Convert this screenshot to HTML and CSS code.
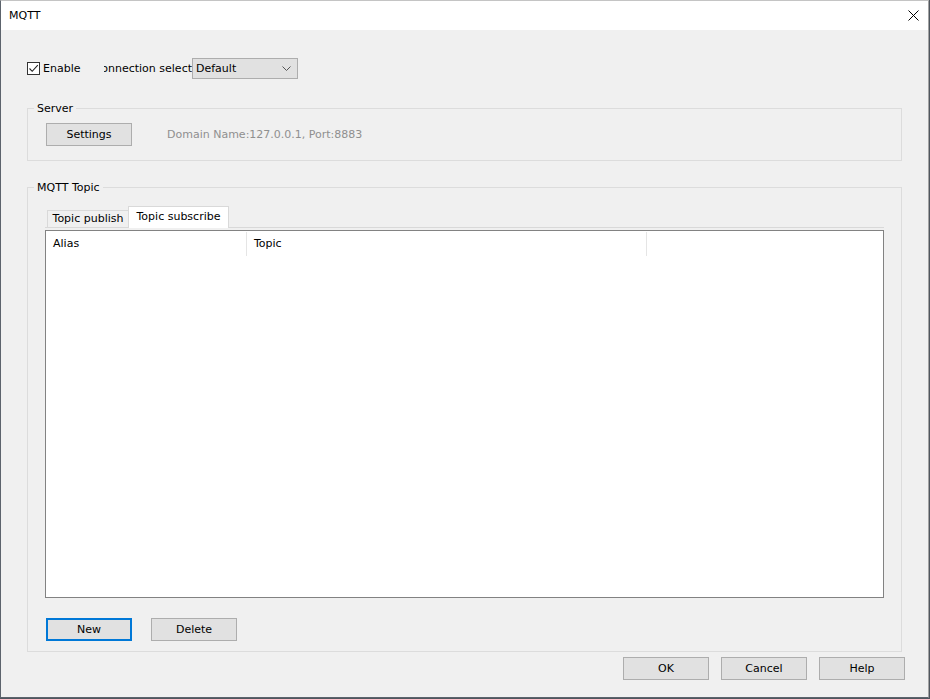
FILE: index.html
```html
<!DOCTYPE html>
<html>
<head>
<meta charset="utf-8">
<title>MQTT</title>
<link rel="stylesheet" href="styles.css">
</head>
<body>
<div class="window">
  <div class="titlebar">
    <span class="title">MQTT</span>
    <span class="close">
      <svg width="11" height="11" viewBox="0 0 11 11"><path d="M0.5 0.5 L10.5 10.5 M10.5 0.5 L0.5 10.5" stroke="#000" stroke-width="1" fill="none"/></svg>
    </span>
  </div>
  <div class="content">
    <div class="row-top">
      <label class="enable">
        <span class="checkbox">
          <svg width="11" height="11" viewBox="0 0 11 11"><path d="M1.5 5.5 L4.2 8.3 L9.8 2.2" stroke="#222" stroke-width="1.1" fill="none"/></svg>
        </span>
        <span class="enable-text">Enable</span>
      </label>
      <div class="conn-label"><span>Connection select</span></div>
      <div class="select">
        <span class="select-text">Default</span>
        <svg class="chev" width="9" height="5" viewBox="0 0 9 5"><path d="M0.5 0.5 L4.5 4.5 L8.5 0.5" stroke="#555" stroke-width="1" fill="none"/></svg>
      </div>
    </div>

    <div class="group server">
      <div class="group-title">Server</div>
      <div class="server-row">
        <button class="btn">Settings</button>
        <span class="info">Domain Name:127.0.0.1, Port:8883</span>
      </div>
    </div>

    <div class="group topic">
      <div class="group-title">MQTT Topic</div>
      <div class="tabs">
        <div class="tab">Topic publish</div>
        <div class="tab active">Topic subscribe</div>
      </div>
      <div class="pane">
        <div class="list">
          <div class="list-header">
            <div class="col col-alias">Alias</div>
            <div class="col col-topic">Topic</div>
          </div>
        </div>
      </div>
      <div class="list-buttons">
        <button class="btn default">New</button>
        <button class="btn">Delete</button>
      </div>
    </div>

    <div class="dialog-buttons">
      <button class="btn">OK</button>
      <button class="btn">Cancel</button>
      <button class="btn">Help</button>
    </div>
  </div>
</div>
</body>
</html>
```

FILE: styles.css
```css
html, body {
  margin: 0;
  padding: 0;
}
body {
  background: #4f565e;
  width: 930px;
  height: 699px;
  overflow: hidden;
  font-family: "DejaVu Sans", Verdana, sans-serif;
  font-size: 11px;
  color: #000;
}
.window {
  width: 929px;
  height: 698px;
  box-sizing: border-box;
  background: #f0f0f0;
  border-left: 1px solid #5c636c;
  border-right: 1px solid #a3a3a3;
  border-top: 1px solid #c4c4c4;
  border-bottom: 1px solid #5c636c;
  display: flex;
  flex-direction: column;
}
.titlebar {
  height: 29px;
  background: #fff;
  display: flex;
  align-items: center;
  justify-content: space-between;
  padding: 0 9px 0 8px;
  flex-shrink: 0;
}
.title {
  font-size: 11px;
  line-height: 14px;
  color: #000;
}
.close {
  display: flex;
  width: 11px;
  height: 11px;
}
.content {
  padding: 0 26px 0 26px;
  display: flex;
  flex-direction: column;
}
.row-top {
  margin-top: 28px;
  height: 21px;
  display: flex;
  align-items: center;
}
.enable {
  width: 77px;
  display: flex;
  align-items: center;
  flex-shrink: 0;
}
.checkbox {
  width: 11px;
  height: 11px;
  border: 1px solid #333;
  background: #fff;
  display: flex;
}
.enable-text {
  margin-left: 3px;
  line-height: 14px;
}
.conn-label {
  width: 88px;
  overflow: hidden;
  display: flex;
  justify-content: flex-end;
  white-space: nowrap;
  flex-shrink: 0;
}
.conn-label span {
  flex-shrink: 0;
  line-height: 14px;
}
.select {
  height: 19px;
  width: 95px;
  border: 1px solid #adadad;
  background: #e1e1e1;
  display: flex;
  align-items: center;
  justify-content: space-between;
  padding: 0 6px 0 3px;
}
.select-text {
  line-height: 14px;
}
.chev {
  display: block;
}
.group {
  border: 1px solid #dcdcdc;
  padding: 0 17px 0 18px;
  display: flex;
  flex-direction: column;
}
.group-title {
  margin-top: -8px;
  margin-left: -12px;
  padding: 0 3px;
  line-height: 16px;
  background: #f0f0f0;
  align-self: flex-start;
}
.server {
  margin-top: 29px;
  padding-bottom: 14px;
}
.server-row {
  margin-top: 6px;
  display: flex;
  align-items: center;
}
.btn {
  width: 86px;
  height: 23px;
  box-sizing: border-box;
  border: 1px solid #adadad;
  background: #e1e1e1;
  font-family: "DejaVu Sans", Verdana, sans-serif;
  font-size: 11px;
  color: #000;
  padding: 0;
  margin: 0;
  line-height: 14px;
}
.btn.default {
  border: 2px solid #0078d7;
}
.info {
  margin-left: 35px;
  color: #8f8f8f;
  line-height: 14px;
}
.topic {
  margin-top: 26px;
  padding: 0 17px 10px 17px;
}
.topic .group-title {
  margin-left: -11px;
}
.tabs {
  margin-top: 10px;
  height: 21px;
  padding-left: 2px;
  display: flex;
  align-items: flex-end;
}
.tab {
  height: 16px;
  width: 80px;
  border: 1px solid #d9d9d9;
  border-bottom: none;
  background: #f0f0f0;
  display: flex;
  align-items: center;
  justify-content: center;
  line-height: 14px;
}
.tab.active {
  height: 22px;
  width: 101px;
  margin-left: -1px;
  margin-bottom: -1px;
  background: #fff;
  position: relative;
  z-index: 1;
  align-items: flex-start;
  padding-top: 3px;
  box-sizing: border-box;
}
.pane {
  border-top: 1px solid #d9d9d9;
  padding-top: 2px;
}
.list {
  height: 366px;
  border: 1px solid #828282;
  background: #fff;
}
.list-header {
  margin-top: 1px;
  height: 24px;
  display: flex;
}
.col {
  height: 24px;
  border-right: 1px solid #e5e5e5;
  box-sizing: border-box;
  padding-left: 7px;
  display: flex;
  align-items: center;
  line-height: 14px;
}
.col-alias {
  width: 201px;
}
.col-topic {
  width: 400px;
}
.list-buttons {
  margin-top: 20px;
  padding-left: 1px;
  display: flex;
  gap: 19px;
}
.dialog-buttons {
  margin-top: 5px;
  margin-right: -3px;
  display: flex;
  justify-content: flex-end;
  gap: 12px;
}
```
